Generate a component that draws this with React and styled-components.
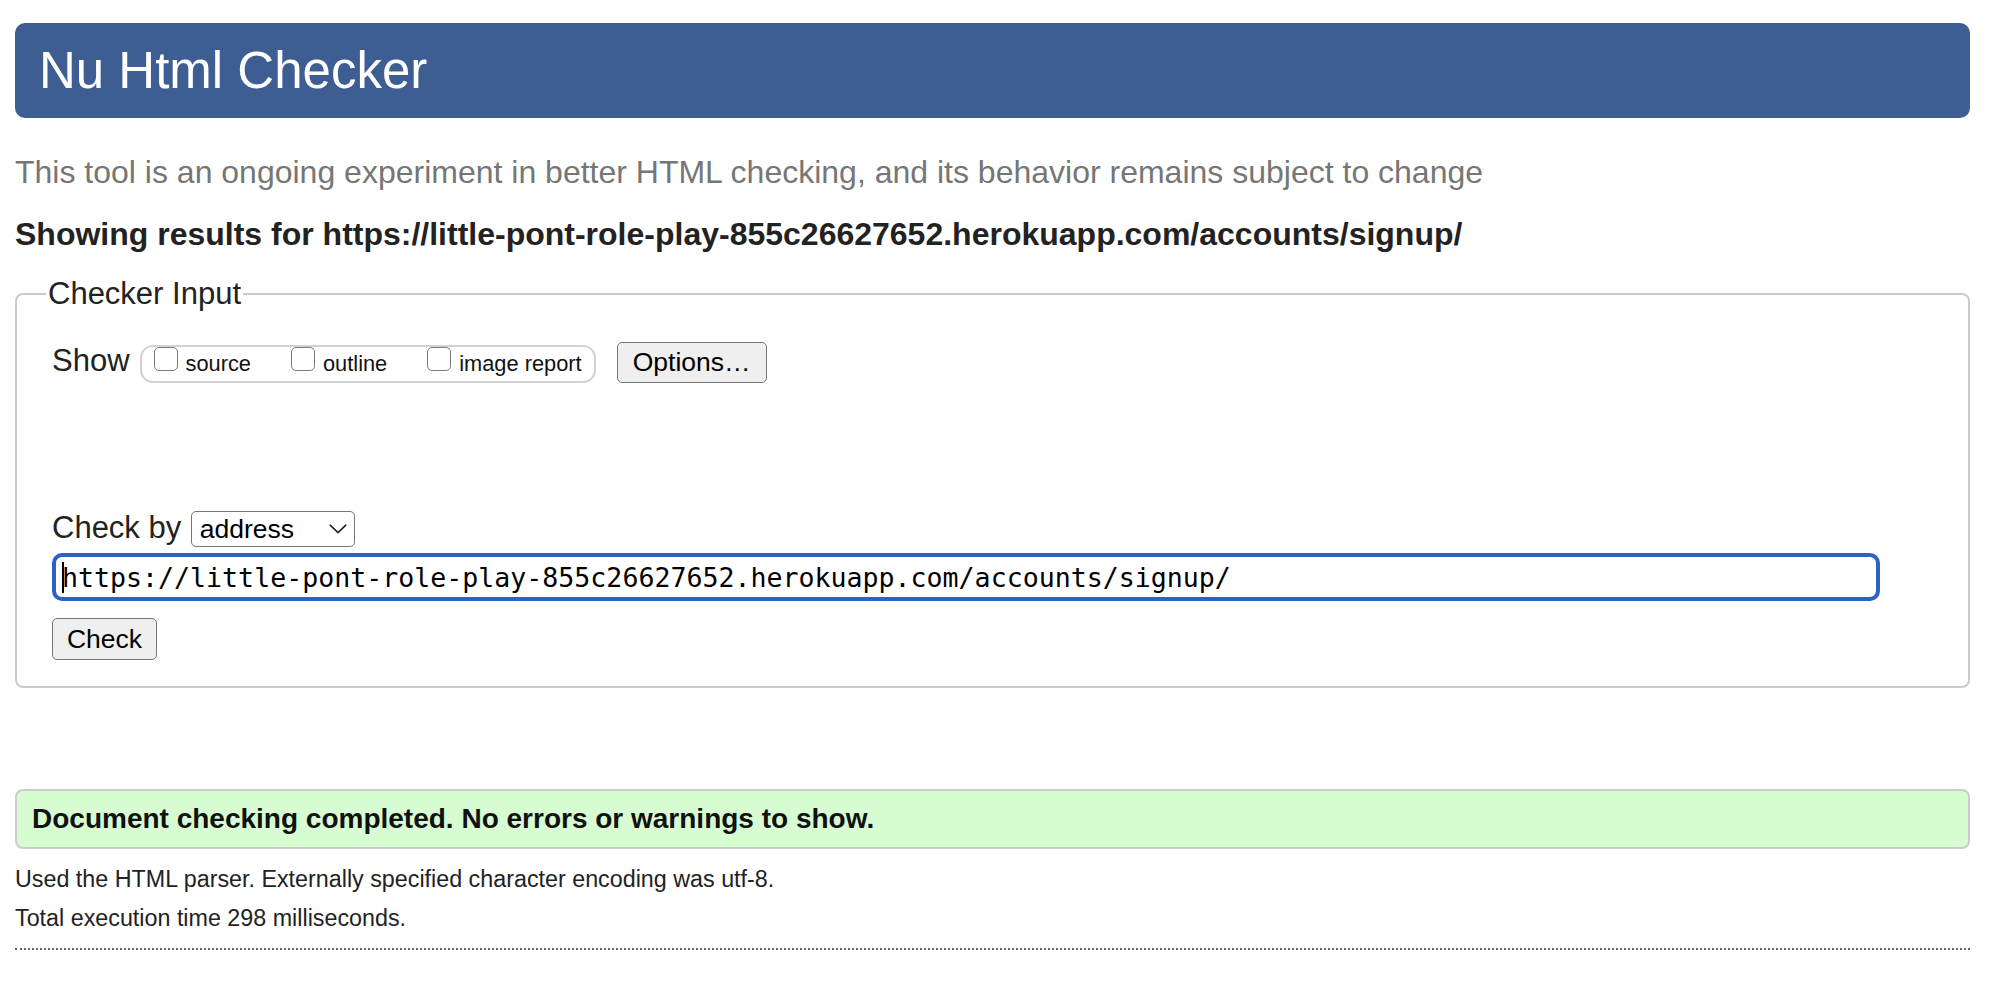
import styled, { createGlobalStyle } from "styled-components";

const GlobalStyle = createGlobalStyle`
  body {
    margin: 0;
    background: #fff;
    color: #222;
    font-family: "Liberation Sans", Arial, Helvetica, sans-serif;
  }
`;

const checkedUrl =
  "https://little-pont-role-play-855c26627652.herokuapp.com/accounts/signup/";

const showOptions = ["source", "outline", "image report"];

const App = () => {
  return (
    <>
      <GlobalStyle />
      <Page>
        <Header>Nu Html Checker</Header>
        <Intro>
          This tool is an ongoing experiment in better HTML checking, and its
          behavior remains subject to change
        </Intro>
        <ResultsFor>Showing results for {checkedUrl}</ResultsFor>

        <CheckerInput>
          <Legend>Checker Input</Legend>
          <FieldsetBody>
            <ShowRow>
              <FieldLabel>Show</FieldLabel>
              <ShowGroup>
                {showOptions.map((option) => (
                  <ShowOption key={option}>
                    <Checkbox type="checkbox" />
                    <OptionText>{option}</OptionText>
                  </ShowOption>
                ))}
              </ShowGroup>
              <Button type="button" $width={150} $height={41}>
                Options…
              </Button>
            </ShowRow>

            <CheckByRow>
              <FieldLabel>Check by</FieldLabel>
              <SelectWrap>
                <Select defaultValue="address">
                  <option value="address">address</option>
                  <option value="file">file upload</option>
                  <option value="text">text input</option>
                </Select>
                <Chevron width="18" height="10" viewBox="0 0 18 10">
                  <path
                    d="M1.2 1.2 L9 8.6 L16.8 1.2"
                    fill="none"
                    stroke="#222"
                    strokeWidth="1.6"
                    strokeLinecap="round"
                    strokeLinejoin="round"
                  />
                </Chevron>
              </SelectWrap>
            </CheckByRow>

            <UrlBox>
              <Caret />
              <UrlText>{checkedUrl}</UrlText>
            </UrlBox>

            <CheckButtonWrap>
              <Button type="button" $width={105} $height={42}>
                Check
              </Button>
            </CheckButtonWrap>
          </FieldsetBody>
        </CheckerInput>

        <SuccessBox>
          Document checking completed. No errors or warnings to show.
        </SuccessBox>
        <DetailsList>
          <Details>
            Used the HTML parser. Externally specified character encoding was
            utf-8.
          </Details>
          <Details>Total execution time 298 milliseconds.</Details>
        </DetailsList>
        <DottedRule />
      </Page>
    </>
  );
};

export default App;

const Page = styled.div`
  width: 1955px;
  margin-left: 15px;
  padding-top: 23px;
`;

const Header = styled.h1`
  margin: 0;
  height: 95px;
  box-sizing: border-box;
  padding-left: 24px;
  border-radius: 10px;
  background: #3e5d92;
  color: #fff;
  font-size: 51px;
  font-weight: 400;
  line-height: 95px;
`;

const Intro = styled.p`
  margin: 34px 0 0;
  font-size: 32px;
  line-height: 40px;
  color: #767676;
`;

const ResultsFor = styled.p`
  margin: 22px 0 0;
  font-size: 32px;
  font-weight: 700;
  line-height: 40px;
  color: #222;
`;

const CheckerInput = styled.fieldset`
  margin: 22px 0 0;
  padding: 0 0 26px 29px;
  min-width: 0;
  border: 2px solid #cbcbcb;
  border-radius: 8px;
`;

const Legend = styled.legend`
  padding: 0 2px;
  font-size: 31px;
  line-height: 36px;
  color: #222;
`;

const FieldsetBody = styled.div`
  display: flex;
  flex-direction: column;
  align-items: flex-start;
  padding-left: 6px;
`;

const ShowRow = styled.div`
  display: flex;
  align-items: baseline;
  margin-top: 30px;
`;

const CheckByRow = styled.div`
  display: flex;
  align-items: baseline;
  margin-top: 127px;
`;

const FieldLabel = styled.span`
  margin-right: 10px;
  font-size: 31px;
  line-height: 36px;
  color: #222;
`;

const ShowGroup = styled.div`
  display: flex;
  align-items: baseline;
  height: 38px;
  box-sizing: border-box;
  padding: 0 12px;
  margin-right: 21px;
  border: 2px solid #d2d2d2;
  border-radius: 13px;
`;

const ShowOption = styled.label`
  display: flex;
  align-items: baseline;
  margin-right: 40px;

  &:last-child {
    margin-right: 0;
  }
`;

const Checkbox = styled.input`
  appearance: none;
  width: 24px;
  height: 24px;
  margin: 0 8px 2px 0;
  box-sizing: border-box;
  border: 1.5px solid #7c7c7c;
  border-radius: 5px;
  background: #fff;
`;

const OptionText = styled.span`
  font-size: 21.8px;
  line-height: 24px;
  color: #111;
`;

const Button = styled.button`
  width: ${(props) => props.$width}px;
  height: ${(props) => props.$height}px;
  padding: 0;
  box-sizing: border-box;
  border: 1.5px solid #767676;
  border-radius: 5px;
  background: #efefef;
  color: #000;
  font-family: "Liberation Sans", Arial, Helvetica, sans-serif;
  font-size: 26.5px;
`;

const SelectWrap = styled.div`
  position: relative;
  display: inline-flex;
`;

const Select = styled.select`
  appearance: none;
  width: 164px;
  height: 36px;
  box-sizing: border-box;
  padding: 0 0 0 7.5px;
  border: 1.5px solid #767676;
  border-radius: 5px;
  background: #fff;
  color: #000;
  font-family: "Liberation Sans", Arial, Helvetica, sans-serif;
  font-size: 26.5px;
`;

const Chevron = styled.svg`
  position: absolute;
  right: 8px;
  top: 13px;
  pointer-events: none;
`;

const UrlBox = styled.div`
  display: flex;
  align-items: center;
  width: 1828px;
  height: 48px;
  margin-top: 6px;
  box-sizing: border-box;
  padding-left: 6px;
  border: 4px solid #2c61c8;
  border-radius: 10px;
  background: #fff;
`;

const Caret = styled.span`
  width: 2px;
  height: 31px;
  margin-right: -2px;
  background: #000;
`;

const UrlText = styled.span`
  font-family: "DejaVu Sans Mono", "Liberation Mono", monospace;
  font-size: 26.6px;
  color: #000;
  white-space: pre;
`;

const CheckButtonWrap = styled.div`
  margin-top: 17px;
`;

const SuccessBox = styled.div`
  margin-top: 101px;
  height: 60px;
  box-sizing: border-box;
  padding-left: 15px;
  border: 2px solid #cccccc;
  border-radius: 8px;
  background: #d8fcd2;
  color: #111;
  font-size: 28px;
  font-weight: 700;
  line-height: 56px;
`;

const DetailsList = styled.div`
  margin-top: 10.5px;
`;

const Details = styled.p`
  margin: 0;
  font-size: 23.3px;
  line-height: 39px;
  color: #222;
`;

const DottedRule = styled.div`
  margin-top: 10.5px;
  border-top: 2px dotted #666;
`;
